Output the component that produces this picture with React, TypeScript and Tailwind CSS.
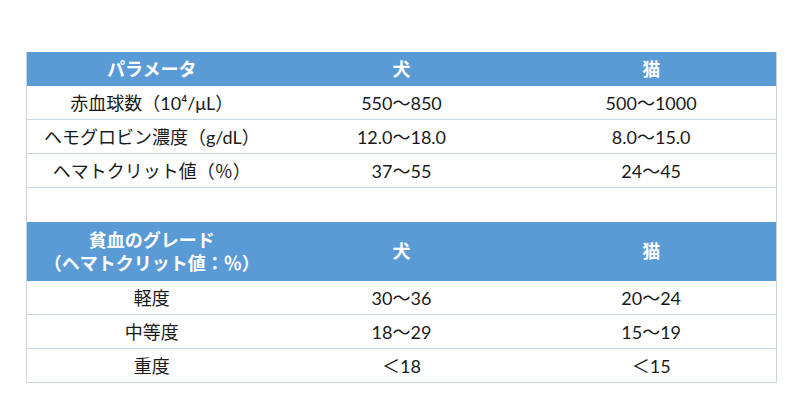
const font = {
  fontFamily: '"Lato", "Noto Sans CJK JP", sans-serif',
};

type Row = [string, string, string];

const table1: Row[] = [
  ["赤血球数（10⁴/μL）", "550〜850", "500〜1000"],
  ["ヘモグロビン濃度（g/dL）", "12.0〜18.0", "8.0〜15.0"],
  ["ヘマトクリット値（％）", "37〜55", "24〜45"],
];

const table2: Row[] = [
  ["軽度", "30〜36", "20〜24"],
  ["中等度", "18〜29", "15〜19"],
  ["重度", "＜18", "＜15"],
];

function BodyRow({ row }: { row: Row }) {
  return (
    <div className="grid grid-cols-3 h-[34px] border-b border-[#c8d6e3] text-[18px] text-[#1a1a1a]">
      {row.map((c, i) => (
        <div key={i} className="flex items-center justify-center leading-none">
          {c}
        </div>
      ))}
    </div>
  );
}

export default function App() {
  return (
    <div className="w-[800px] h-[419px] bg-white pt-[52px] pl-[26px]" style={font}>
      <div className="w-[751px] border-x border-[#c8d6e3]">
        <div className="grid grid-cols-3 h-[34px] bg-[#5b9bd5] text-white font-bold text-[18px]">
          <div className="flex items-center justify-center">パラメータ</div>
          <div className="flex items-center justify-center">犬</div>
          <div className="flex items-center justify-center">猫</div>
        </div>
        {table1.map((r, i) => (
          <BodyRow key={i} row={r} />
        ))}
        <div className="h-[34px]" />
        <div className="grid grid-cols-3 h-[59px] bg-[#5b9bd5] text-white font-bold text-[18px]">
          <div className="flex flex-col items-center justify-center leading-[23px]">
            <span>貧血のグレード</span>
            <span>（ヘマトクリット値：％）</span>
          </div>
          <div className="flex items-center justify-center">犬</div>
          <div className="flex items-center justify-center">猫</div>
        </div>
        {table2.map((r, i) => (
          <BodyRow key={i} row={r} />
        ))}
      </div>
    </div>
  );
}
